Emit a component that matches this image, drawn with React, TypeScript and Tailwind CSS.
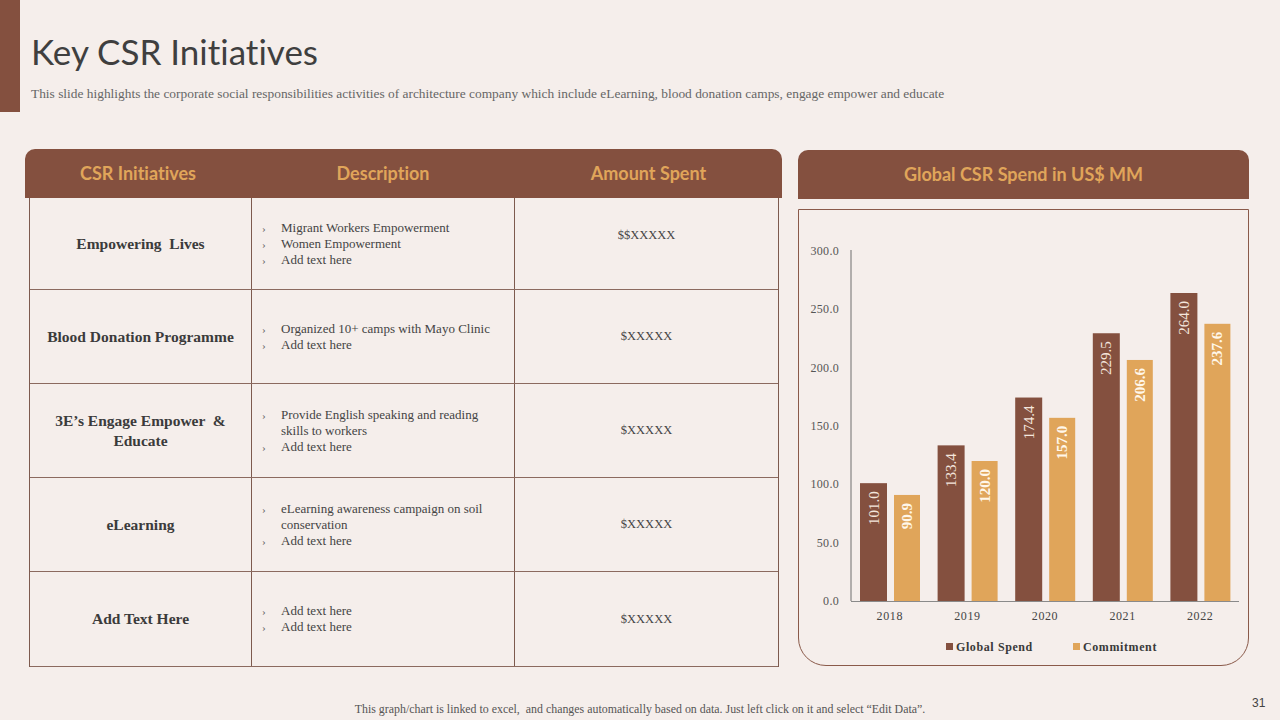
import React from "react";

const BROWN = "#84503f";
const GOLD = "#e0a55a";

const rows = [
  { title: "Empowering  Lives", desc: ["Migrant Workers Empowerment", "Women Empowerment", "Add text here"], amount: "$$XXXXX", h: "h-[92px]", amtShift: true },
  { title: "Blood Donation Programme", desc: ["Organized 10+ camps with Mayo Clinic", "Add text here"], amount: "$XXXXX", h: "h-[94px]" },
  { title: "3E\u2019s Engage Empower  &\nEducate", desc: ["Provide English speaking and reading skills to workers", "Add text here"], amount: "$XXXXX", h: "h-[94px]" },
  { title: "eLearning", desc: ["eLearning awareness campaign on soil conservation", "Add text here"], amount: "$XXXXX", h: "h-[94px]" },
  { title: "Add Text Here", desc: ["Add text here", "Add text here"], amount: "$XXXXX", h: "h-[95px]" },
];

const global = [101.0, 133.4, 174.4, 229.5, 264.0];
const commit = [90.9, 120.0, 157.0, 206.6, 237.6];
const years = ["2018", "2019", "2020", "2021", "2022"];

function Chart() {
  const x0 = 52;
  const y0 = 391;
  const k = 350 / 300;
  const cw = 77.6;
  const ticks = [0, 50, 100, 150, 200, 250, 300];
  const serif = "'Liberation Serif', 'Times New Roman', serif";
  return (
    <svg width="449" height="455" className="block" style={{ fontFamily: serif }}>
      {ticks.map((t) => (
        <text key={t} x={40} y={y0 - t * k} textAnchor="end" dominantBaseline="central" fontSize="12" fill="#555" letterSpacing="0.3">
          {t.toFixed(1)}
        </text>
      ))}
      <line x1={x0} y1={40} x2={x0} y2={y0} stroke="#6f6f6f" strokeWidth="1" />
      <line x1={x0} y1={y0 + 0.5} x2={440} y2={y0 + 0.5} stroke="#8a8a8a" strokeWidth="1" />
      {years.map((yr, i) => {
        const bx = x0 + i * cw + 9;
        const gx = bx + 34;
        const bh = global[i] * k;
        const gh = commit[i] * k;
        return (
          <g key={yr}>
            <rect x={bx} y={y0 - bh} width={27} height={bh} fill={BROWN} />
            <rect x={gx} y={y0 - gh} width={26} height={gh} fill={GOLD} />
            <text
              transform={`translate(${bx + 13.5}, ${y0 - bh + 8}) rotate(-90)`}
              textAnchor="end"
              dominantBaseline="central"
              fontSize="15"
              fill="#f4e6dd"
            >
              {global[i].toFixed(1)}
            </text>
            <text
              transform={`translate(${gx + 13}, ${y0 - gh + 8}) rotate(-90)`}
              textAnchor="end"
              dominantBaseline="central"
              fontSize="15"
              fontWeight="bold"
              fill="#fff7ea"
            >
              {commit[i].toFixed(1)}
            </text>
            <text x={x0 + i * cw + cw / 2} y={406} textAnchor="middle" dominantBaseline="central" fontSize="12" fill="#444" letterSpacing="0.6">
              {yr}
            </text>
          </g>
        );
      })}
      <rect x={147} y={433} width={7} height={7} fill={BROWN} />
      <text x={157} y={437} dominantBaseline="central" fontSize="12" fontWeight="bold" fill="#3a3a3a" letterSpacing="0.6">
        Global Spend
      </text>
      <rect x={274} y={433} width={7} height={7} fill={GOLD} />
      <text x={284} y={437} dominantBaseline="central" fontSize="12" fontWeight="bold" fill="#3a3a3a" letterSpacing="0.6">
        Commitment
      </text>
    </svg>
  );
}

export default function App() {
  const serif = "font-['Liberation_Serif','Times_New_Roman',serif]";
  return (
    <div className="w-[1280px] h-[720px] bg-[#f5eeeb] relative overflow-hidden flex flex-col [font-variant-ligatures:none]">
      <div className="flex">
        <div className="w-[20px] h-[112px] bg-[#84503f] shrink-0" />
        <div className="pl-[11px] pt-[29px]">
          <h1 className="font-['Lato',sans-serif] text-[35px] leading-[44px] text-[#3f3f3f]">Key CSR Initiatives</h1>
          <p className={`${serif} text-[13.4px] leading-[16px] text-[#666] mt-[13px]`}>
            This slide highlights the corporate social responsibilities activities of architecture company which include eLearning, blood donation camps, engage empower and educate
          </p>
        </div>
      </div>

      <div className="flex pl-[25px] gap-[16px] mt-[37px]">
        {/* Table */}
        <div className="w-[757px] flex flex-col">
          <div className="h-[49px] bg-[#84503f] rounded-t-[10px] grid grid-cols-[226px_264px_1fr] items-center font-['Lato',sans-serif] font-bold text-[18px] text-[#e0a55a]">
            <div className="text-center">CSR Initiatives</div>
            <div className="text-center">Description</div>
            <div className="text-center">Amount Spent</div>
          </div>
          <div className="ml-[4px] mr-[3px] border-l border-r border-[#7d5a4e]">
            {rows.map((r, i) => (
              <div key={i} className={`${r.h} grid grid-cols-[221px_264px_1fr] border-b border-[#8b6a5f]`}>
                <div className={`${serif} font-bold text-[15.5px] leading-[20px] text-[#3b3b3b] flex items-center justify-center text-center whitespace-pre-wrap px-2`}>
                  {r.title}
                </div>
                <div className={`border-l border-r border-[#7d5a4e] flex flex-col justify-center pl-[10px] pr-[12px] ${serif} text-[13px] leading-[16px] text-[#444]`}>
                  {r.desc.map((d, j) => (
                    <div key={j} className="flex">
                      <span className="w-[19px] shrink-0 text-[#666] text-[11px]">›</span>
                      <span>{d}</span>
                    </div>
                  ))}
                </div>
                <div className={`flex items-center justify-center ${serif} text-[12.5px] text-[#444] ${r.amtShift ? "pb-[16px]" : ""}`}>
                  {r.amount}
                </div>
              </div>
            ))}
          </div>
        </div>

        {/* Chart */}
        <div className="w-[451px] flex flex-col pt-[1px]">
          <div className="h-[49px] bg-[#84503f] rounded-t-[10px] flex items-center justify-center font-['Lato',sans-serif] font-bold text-[18px] text-[#e0a55a]">
            Global CSR Spend in US$ MM
          </div>
          <div className="mt-[10px] h-[457px] border border-[#8a5a4a] rounded-b-[28px]">
            <Chart />
          </div>
        </div>
      </div>

      <div className={`absolute left-0 right-0 top-[701px] text-center ${serif} text-[11.9px] text-[#555]`}>
        <span>This graph/chart is linked to excel,&nbsp; and changes automatically based on data. Just left click on it and select “Edit Data”.</span>
      </div>
      <div className="absolute left-[1252px] top-[694px] font-['Liberation_Sans',Arial,sans-serif] text-[12px] text-[#444]">31</div>
    </div>
  );
}
